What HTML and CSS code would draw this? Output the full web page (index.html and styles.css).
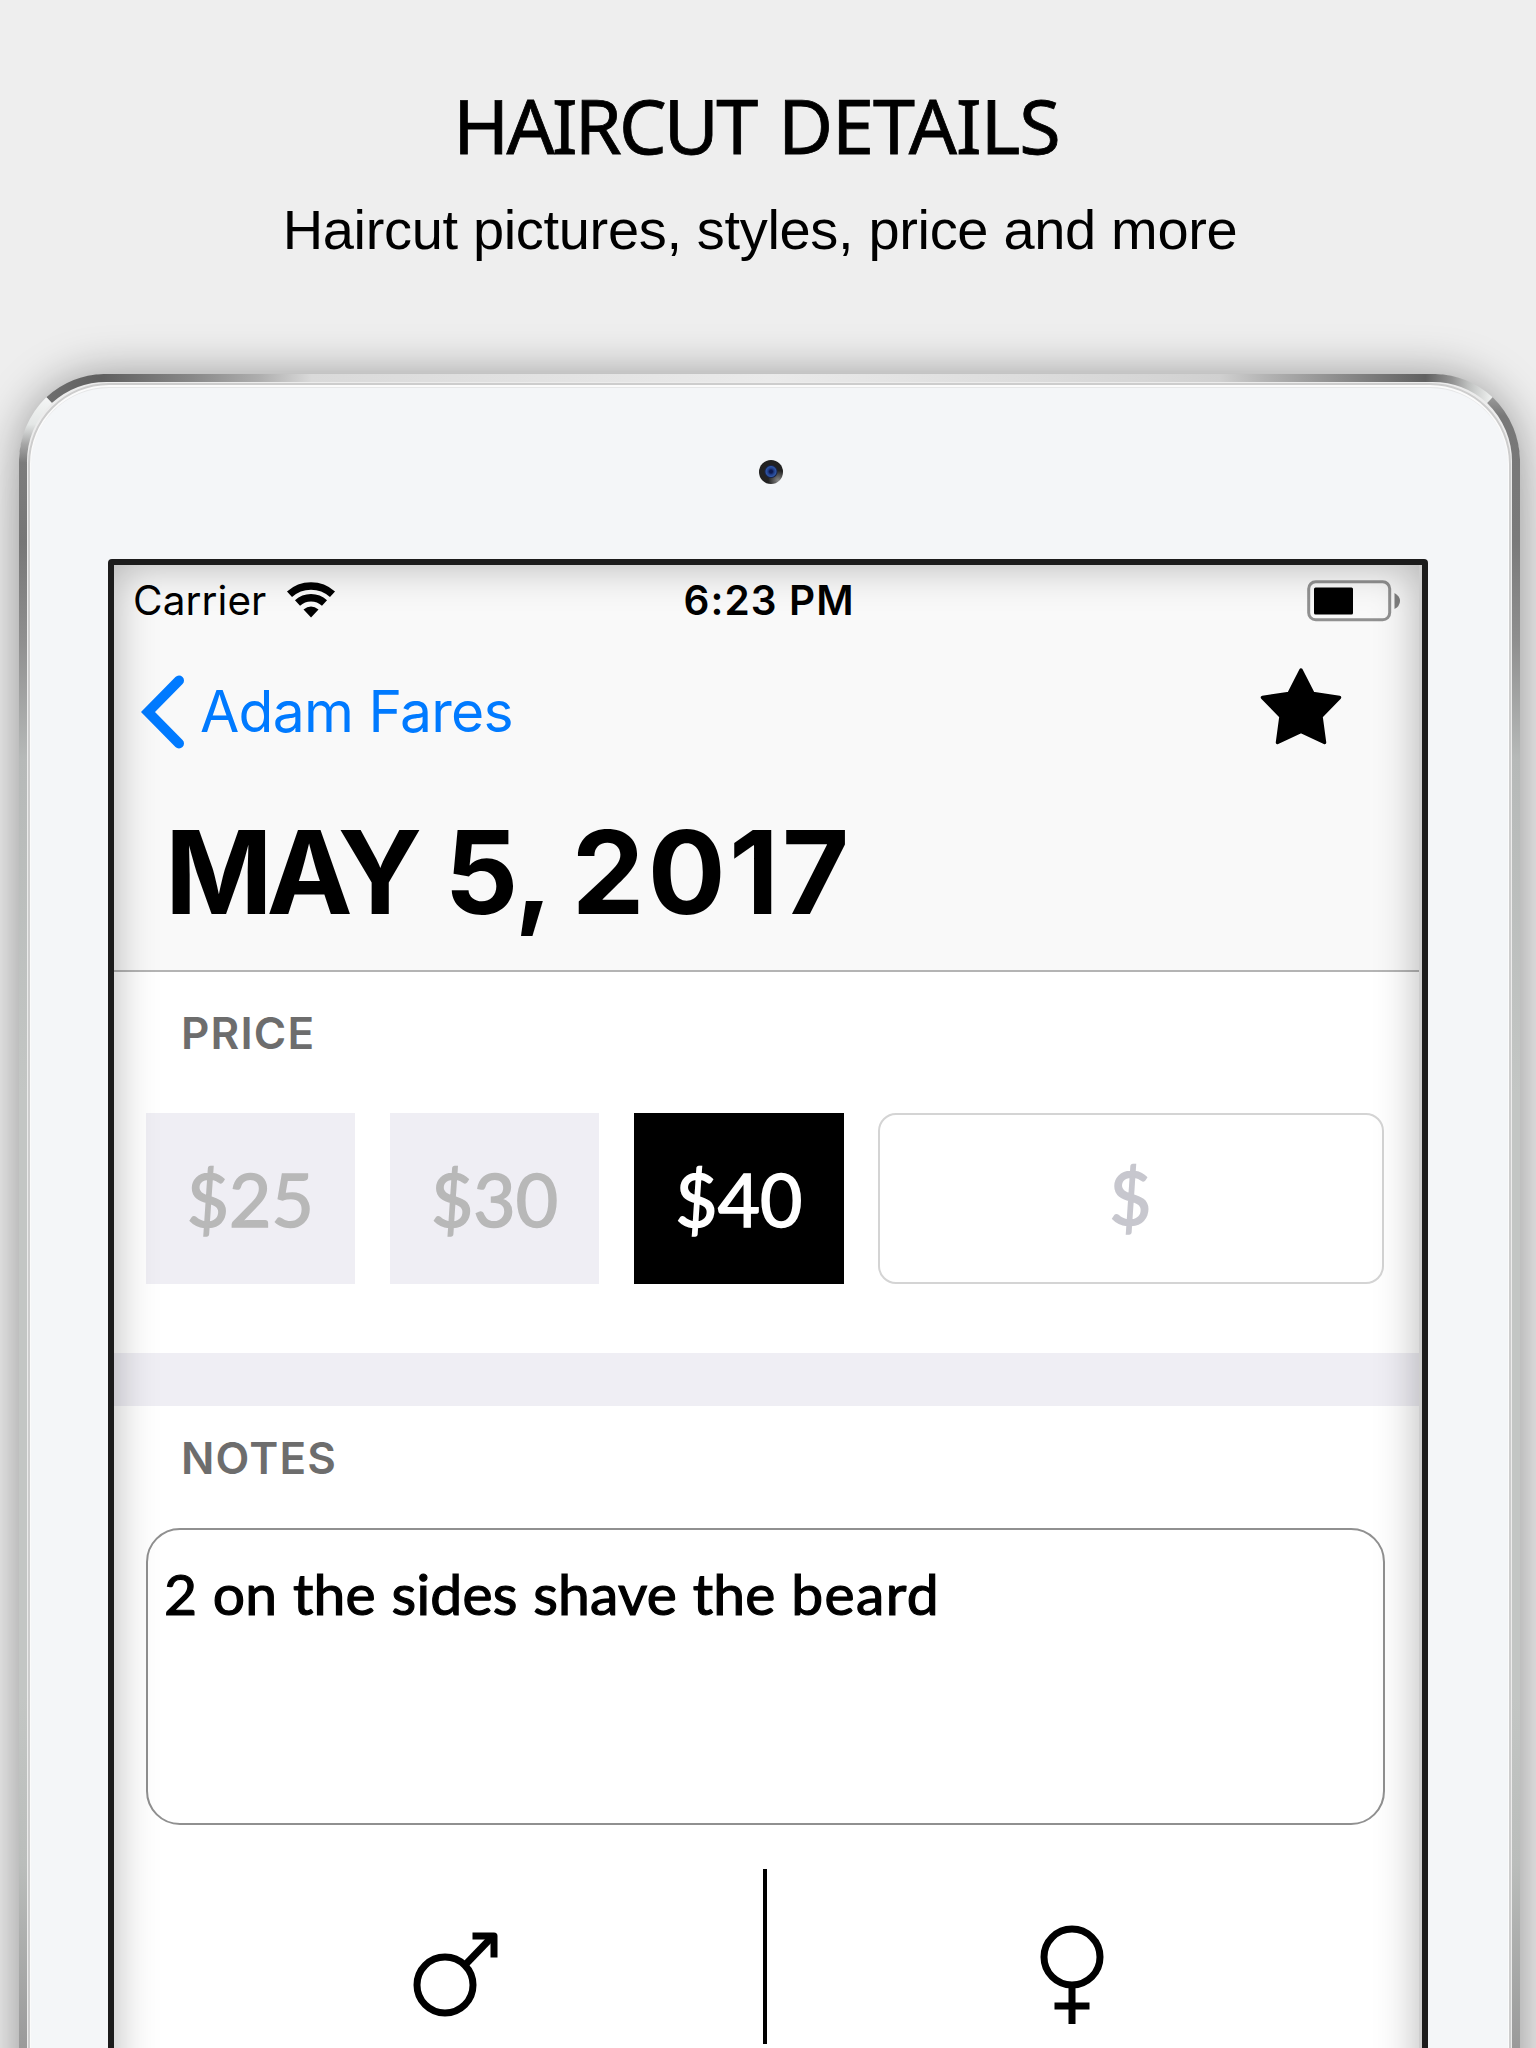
FILE: index.html
```html
<!DOCTYPE html>
<html lang="en">
<head>
<meta charset="utf-8">
<title>Haircut Details</title>
<link rel="stylesheet" href="styles.css">
</head>
<body>
<main class="promo">
  <header class="promo-head">
    <h1 class="promo-title"><span class="tight">HAIRCUT</span> DETAILS</h1>
    <p class="promo-sub">Haircut pictures, styles, price and more</p>
  </header>

  <div class="device">
    <svg class="frame" viewBox="0 0 1501 1674" width="1501" height="1674" fill="none">
      <defs>
        <linearGradient id="top" gradientUnits="userSpaceOnUse" x1="0" y1="0" x2="1501" y2="0">
          <stop offset="0.02" stop-color="#6e6e6e"/>
          <stop offset="0.055" stop-color="#5f5f5f"/>
          <stop offset="0.115" stop-color="#888"/>
          <stop offset="0.16" stop-color="#aeaeae"/>
          <stop offset="0.195" stop-color="#dadada"/>
          <stop offset="0.5" stop-color="#eaeaea"/>
          <stop offset="0.75" stop-color="#d6d6d6"/>
          <stop offset="0.8" stop-color="#d0d0d0"/>
          <stop offset="0.83" stop-color="#b4b4b4"/>
          <stop offset="0.88" stop-color="#8c8c8c"/>
          <stop offset="0.937" stop-color="#606060"/>
          <stop offset="0.955" stop-color="#939393"/>
          <stop offset="0.965" stop-color="#bcbebd"/>
          <stop offset="0.98" stop-color="#eceeed"/>
        </linearGradient>
        <linearGradient id="left" gradientUnits="userSpaceOnUse" x1="0" y1="0" x2="0" y2="1674">
          <stop offset="0.014" stop-color="#f4f5f5"/>
          <stop offset="0.03" stop-color="#e4e7e6"/>
          <stop offset="0.042" stop-color="#a6a6a6"/>
          <stop offset="0.053" stop-color="#7c7c7c"/>
          <stop offset="0.1" stop-color="#767676"/>
          <stop offset="0.16" stop-color="#8f8f8f"/>
          <stop offset="0.23" stop-color="#b6b9b8"/>
          <stop offset="0.43" stop-color="#c3c6c4"/>
          <stop offset="0.79" stop-color="#c3c6c4"/>
          <stop offset="0.89" stop-color="#babdbb"/>
          <stop offset="1" stop-color="#9a9a9a"/>
        </linearGradient>
        <linearGradient id="right" gradientUnits="userSpaceOnUse" x1="0" y1="0" x2="0" y2="1674">
          <stop offset="0.014" stop-color="#999"/>
          <stop offset="0.025" stop-color="#787878"/>
          <stop offset="0.1" stop-color="#7a7a7a"/>
          <stop offset="0.16" stop-color="#8f8f8f"/>
          <stop offset="0.23" stop-color="#b6b9b8"/>
          <stop offset="0.43" stop-color="#c3c6c4"/>
          <stop offset="0.79" stop-color="#c3c6c4"/>
          <stop offset="0.89" stop-color="#babdbb"/>
          <stop offset="1" stop-color="#9a9a9a"/>
        </linearGradient>
      </defs>
      <path d="M30.1 26.1A86 86 0 0 1 90 4H1411A86 86 0 0 1 1470.900 26.1" stroke="url(#top)" stroke-width="8"/>
      <path d="M4 1674V90A86 86 0 0 1 30.1 26.1" stroke="url(#left)" stroke-width="8"/>
      <path d="M1497 1674V90A86 86 0 0 0 1470.900 26.1" stroke="url(#right)" stroke-width="8"/>
    </svg>
    <div class="camera"></div>

    <div class="screen">
      <section class="app-head">
        <div class="status">
          <div class="carrier"><span>Carrier</span>
            <svg width="50" height="36" viewBox="0 0 49 36">
              <path d="M3 12.300A32 32 0 0 1 46 12.300" fill="none" stroke="#000" stroke-width="7.500"/>
              <path d="M11 21A20 20 0 0 1 38 21" fill="none" stroke="#000" stroke-width="7.500"/>
              <path d="M17 27.500Q24.500 21.500 32 27.500L24.500 35.500Z"/>
            </svg>
          </div>
          <div class="time">6:23 PM</div>
          <svg class="battery" width="94" height="42" viewBox="0 0 94 42">
            <rect x="1.700" y="1.800" width="81" height="38" rx="7" fill="none" stroke="#919191" stroke-width="3"/>
            <rect x="7" y="7.500" width="39" height="27" rx="1.500"/>
            <path d="M87.500 13Q93 16 93 21T87.500 29Z" fill="#808080"/>
          </svg>
        </div>
        <nav class="nav">
          <a class="back">
            <svg width="44" height="76" viewBox="0 0 44 76" fill="none" stroke="#007aff" stroke-width="10" stroke-linecap="round"><path d="M38 6.500L7 38L38 69.500" stroke-miterlimit="4"/></svg>
            <span>Adam Fares</span>
          </a>
          <svg class="star" width="84" height="80" viewBox="0 0 84 80"><path d="M42 4L54 27.500L80.500 31.500L62 50.500L65.500 76.500L42 65.500L18.500 76.500L22 50.500L3.500 31.500L30 27.500Z" stroke="#000" stroke-width="3.500" stroke-linejoin="round"/></svg>
        </nav>
        <h2 class="date"><span class="month">MAY</span> <span class="day">5,</span> <span class="year">2017</span></h2>
      </section>

      <section class="price">
        <h3 class="label label-price">PRICE</h3>
        <div class="options">
          <div class="option">$25</div>
          <div class="option">$30</div>
          <div class="option selected">$40</div>
          <div class="custom">$</div>
        </div>
      </section>

      <section class="notes">
        <h3 class="label label-notes">NOTES</h3>
        <div class="note">2 on the sides shave the <span class="wide">beard</span></div>
      </section>

      <section class="gender">
        <div class="choice male">
          <svg width="90" height="100" viewBox="0 0 90 100" fill="none" stroke="#000" stroke-width="7">
            <circle cx="35" cy="61" r="28"/>
            <path d="M55 41L83 12"/>
            <path d="M62.500 12H84V33.500" stroke-linejoin="round"/>
          </svg>
        </div>
        <div class="divider"></div>
        <div class="choice female">
          <svg width="70" height="110" viewBox="0 0 70 110" fill="none" stroke="#000" stroke-width="7">
            <circle cx="35" cy="35" r="28"/>
            <path d="M35 63V102M17.500 84H52.500"/>
          </svg>
        </div>
      </section>
    </div>
  </div>
</main>
</body>
</html>
```
FILE: styles.css
```css
* { box-sizing: border-box; margin: 0; padding: 0; }
body { background: #eee; color: #000; }
svg { display: block; flex: none; }

.promo {
  width: 1536px;
  height: 2048px;
  overflow: hidden;
  display: flex;
  flex-direction: column;
  align-items: center;
}
.promo-head {
  width: 1520px;
  height: 374px;
  flex: none;
  padding: 75px 16px 0 0;
  text-align: center;
  white-space: nowrap;
}
.promo-title {
  padding-right: 7px;
  font: 400 75.5px/100px "Noto Sans", sans-serif;
  letter-spacing: -1px;
  word-spacing: 4px;
  -webkit-text-stroke: .8px #000;
}
.tight { letter-spacing: -2.8px; }
.promo-sub {
  margin-top: 5px;
  font: 400 56px/100px "Liberation Sans", Arial, sans-serif;
  letter-spacing: -.33px;
}

.device {
  position: relative;
  width: 1501px;
  height: 1760px;
  flex: none;
  margin-left: 3px;
  padding: 86px 92px 0 89px;
  border-radius: 90px 90px 0 0;
  background: #f4f6f8;
  box-shadow: 0 0 45px rgba(0, 0, 0, .36), 0 60px 45px rgba(0, 0, 0, .05),
    inset 0 0 0 9px #ececec, inset 0 0 0 11px #cdcdcd, inset 0 1px 0 12px #fbfbfb, inset 0 3px 0 11px #e6e7e8;
}
.frame { position: absolute; left: 0; top: 0; }
.camera {
  width: 24px;
  height: 24px;
  margin: 0 0 75px 651px;
  border-radius: 50%;
  background:
    radial-gradient(circle at 50% 48%, #0c1950 0 1.5px, #203c86 3px, #2e56a6 5px, #1a2548 6px, transparent 7px),
    radial-gradient(circle at 80% 85%, #888 0, #555 5px, #222 10px);
}

.screen {
  position: relative;
  width: 1320px;
  height: 1620px;
  border: 6px solid #1c1c1c;
  border-radius: 4px 4px 0 0;
  background: #fff;
  font-family: Inter, sans-serif;
  white-space: nowrap;
}
.screen::after {
  content: "";
  position: absolute;
  inset: 0;
  border-right: 3px solid #cecece;
  box-shadow: inset 0 0 44px rgba(0, 0, 0, .29);
  pointer-events: none;
}

.app-head {
  height: 407px;
  background: #f9f9f9;
  border-bottom: 2px solid #b4b4b4;
}
.status {
  display: grid;
  grid-template-columns: 1fr auto 1fr;
  align-items: center;
  height: 72px;
  padding: 0 21px 0 19px;
  font-size: 40.5px;
  line-height: 72px;
}
.carrier { display: flex; align-items: center; gap: 20px; letter-spacing: .1px; }
.carrier svg { margin-top: -3px; }
.time { padding-left: 4px; font-weight: 600; letter-spacing: 1.1px; }
.battery { justify-self: end; margin-top: -1px; }

.nav {
  display: flex;
  align-items: center;
  justify-content: space-between;
  height: 149px;
  padding: 0 79px 0 27px;
}
.back {
  display: flex;
  align-items: center;
  gap: 15px;
  color: #007aff;
  font-size: 57px;
  letter-spacing: -.75px;
}
.star { margin-top: -11px; }
.date {
  padding-left: 51px;
  font-size: 115.5px;
  font-weight: 700;
  line-height: 172px;
  letter-spacing: -2px;
}
.month { margin-right: 3px; letter-spacing: -6px; }
.day { margin-right: -5px; letter-spacing: -1.5px; }
.year { letter-spacing: 3.3px; }

.label {
  padding-left: 67px;
  color: #6d6d6d;
  font-size: 44px;
  font-weight: 600;
  letter-spacing: 1.2px;
}
.price {
  height: 434px;
  border-bottom: 53px solid #efeef4;
}
.label-price { line-height: 122px; }
.options {
  display: grid;
  grid-template-columns: 209.500px 209.500px 209.500px 506px;
  gap: 34.800px;
  height: 171px;
  margin: 19px 0 0 31.500px;
  font-family: Lato, sans-serif;
  font-size: 73px;
  -webkit-text-stroke: 1.6px currentColor;
}
.option, .custom {
  display: flex;
  align-items: center;
  justify-content: center;
}
.option { background: #efeef4; color: #b8b8b8; }
.selected { background: #000; color: #fff; }
.custom {
  padding: 0 2px 4px 0;
  border: 2px solid #d4d4d4;
  border-radius: 18px;
  color: #c7c7ce;
}

.label-notes { line-height: 104px; }
.note {
  width: 1239px;
  height: 297px;
  margin: 18px 0 0 32px;
  padding: 28px 0 0 16px;
  border: 2px solid #909090;
  border-radius: 34px;
  font: 400 57px/70px Lato, sans-serif;
  letter-spacing: .2px;
  word-spacing: .8px;
  -webkit-text-stroke: 1.2px #000;
}
.wide { letter-spacing: 1.4px; }
.gender {
  display: flex;
  justify-content: center;
  height: 223px;
  padding: 44px 6px 4px 0;
}
.divider { width: 4px; background: #000; }
.choice { width: 650px; display: flex; }
.male { padding: 55px 0 0 295.500px; }
.female { padding: 53px 0 0 269.500px; }
```
